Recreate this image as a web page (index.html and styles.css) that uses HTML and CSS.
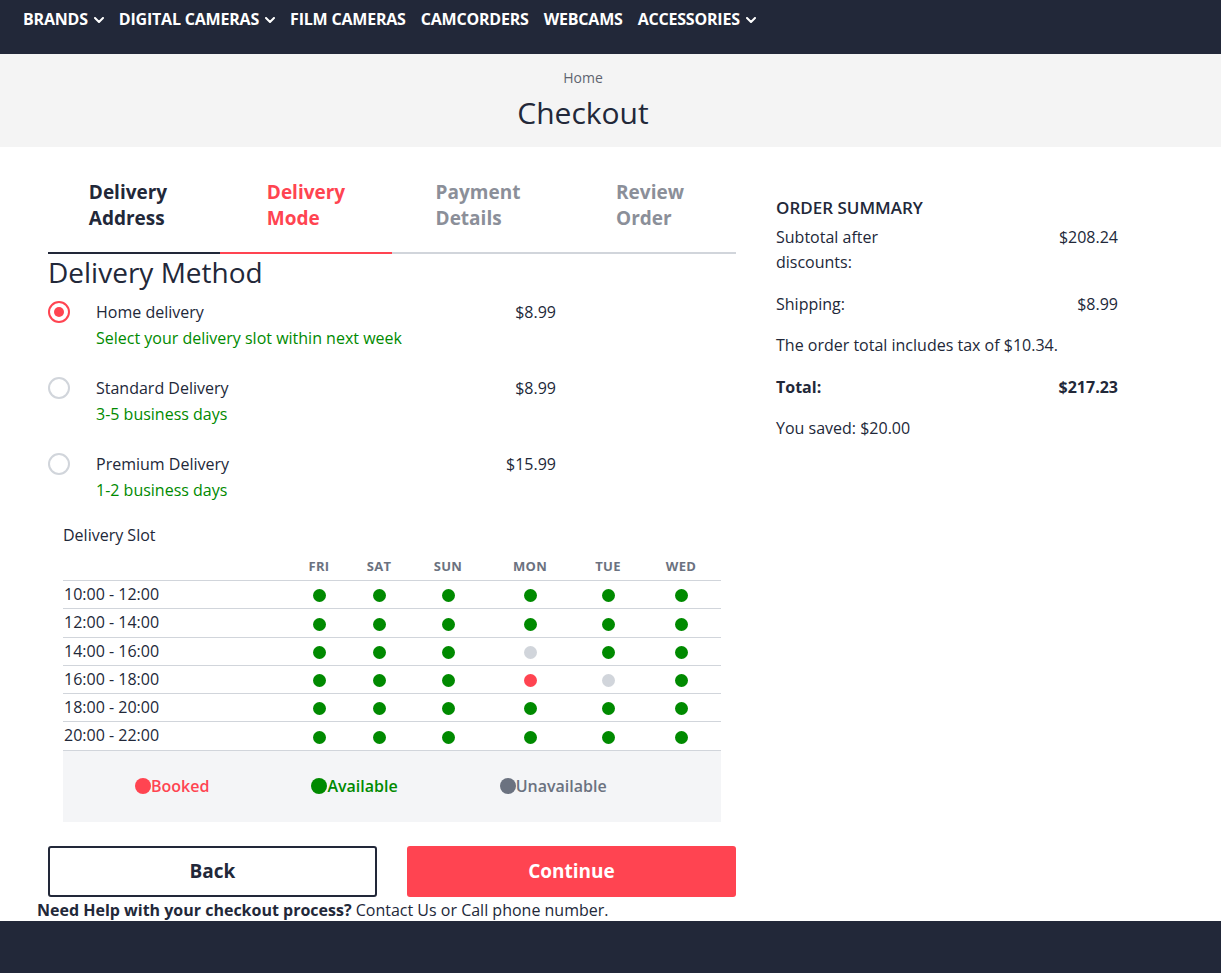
FILE: index.html
```html
<!DOCTYPE html>
<html lang="en">
<head>
<meta charset="utf-8">
<title>Checkout</title>
<link rel="stylesheet" href="styles.css">
</head>
<body>
<nav class="topnav">
  <ul class="nav-list">
    <li class="nav-item">BRANDS <svg class="chev" viewBox="0 0 10 6" width="10" height="6"><path d="M1 1l4 4 4-4" fill="none" stroke="#fff" stroke-width="2" stroke-linecap="round" stroke-linejoin="round"/></svg></li>
    <li class="nav-item">DIGITAL CAMERAS <svg class="chev" viewBox="0 0 10 6" width="10" height="6"><path d="M1 1l4 4 4-4" fill="none" stroke="#fff" stroke-width="2" stroke-linecap="round" stroke-linejoin="round"/></svg></li>
    <li class="nav-item">FILM CAMERAS</li>
    <li class="nav-item">CAMCORDERS</li>
    <li class="nav-item">WEBCAMS</li>
    <li class="nav-item">ACCESSORIES <svg class="chev" viewBox="0 0 10 6" width="10" height="6"><path d="M1 1l4 4 4-4" fill="none" stroke="#fff" stroke-width="2" stroke-linecap="round" stroke-linejoin="round"/></svg></li>
  </ul>
</nav>

<header class="page-head">
  <div class="container head-inner">
    <div class="crumb">Home</div>
    <h1 class="title">Checkout</h1>
  </div>
</header>

<main class="container layout">
  <section class="left">
    <div class="tabs">
      <div class="tab tab-done"><span>Delivery<br>Address</span></div>
      <div class="tab tab-active"><span>Delivery<br>Mode</span></div>
      <div class="tab tab-todo"><span>Payment<br>Details</span></div>
      <div class="tab tab-todo"><span>Review<br>Order</span></div>
    </div>

    <h2 class="method-title">Delivery Method</h2>

    <div class="options">
      <div class="option">
        <span class="radio radio-on"></span>
        <div class="opt-text">
          <div class="opt-name">Home delivery</div>
          <div class="opt-sub">Select your delivery slot within next week</div>
        </div>
        <div class="opt-price">$8.99</div>
      </div>
      <div class="option">
        <span class="radio"></span>
        <div class="opt-text">
          <div class="opt-name">Standard Delivery</div>
          <div class="opt-sub">3-5 business days</div>
        </div>
        <div class="opt-price">$8.99</div>
      </div>
      <div class="option">
        <span class="radio"></span>
        <div class="opt-text">
          <div class="opt-name">Premium Delivery</div>
          <div class="opt-sub">1-2 business days</div>
        </div>
        <div class="opt-price">$15.99</div>
      </div>
    </div>

    <div class="slot">
      <div class="slot-label">Delivery Slot</div>
      <table class="slot-table">
        <colgroup>
          <col class="c-time"><col class="c-fri"><col class="c-sat"><col class="c-sun"><col class="c-mon"><col class="c-tue"><col class="c-wed">
        </colgroup>
        <thead>
          <tr><th></th><th>FRI</th><th>SAT</th><th>SUN</th><th>MON</th><th>TUE</th><th>WED</th></tr>
        </thead>
        <tbody>
          <tr><td class="time">10:00 - 12:00</td><td><i class="dot g"></i></td><td><i class="dot g"></i></td><td><i class="dot g"></i></td><td><i class="dot g"></i></td><td><i class="dot g"></i></td><td><i class="dot g"></i></td></tr>
          <tr><td class="time">12:00 - 14:00</td><td><i class="dot g"></i></td><td><i class="dot g"></i></td><td><i class="dot g"></i></td><td><i class="dot g"></i></td><td><i class="dot g"></i></td><td><i class="dot g"></i></td></tr>
          <tr><td class="time">14:00 - 16:00</td><td><i class="dot g"></i></td><td><i class="dot g"></i></td><td><i class="dot g"></i></td><td><i class="dot u"></i></td><td><i class="dot g"></i></td><td><i class="dot g"></i></td></tr>
          <tr><td class="time">16:00 - 18:00</td><td><i class="dot g"></i></td><td><i class="dot g"></i></td><td><i class="dot g"></i></td><td><i class="dot r"></i></td><td><i class="dot u"></i></td><td><i class="dot g"></i></td></tr>
          <tr><td class="time">18:00 - 20:00</td><td><i class="dot g"></i></td><td><i class="dot g"></i></td><td><i class="dot g"></i></td><td><i class="dot g"></i></td><td><i class="dot g"></i></td><td><i class="dot g"></i></td></tr>
          <tr><td class="time">20:00 - 22:00</td><td><i class="dot g"></i></td><td><i class="dot g"></i></td><td><i class="dot g"></i></td><td><i class="dot g"></i></td><td><i class="dot g"></i></td><td><i class="dot g"></i></td></tr>
        </tbody>
      </table>
      <div class="legend">
        <span class="leg leg-booked"><i class="ldot"></i>Booked</span>
        <span class="leg leg-avail"><i class="ldot"></i>Available</span>
        <span class="leg leg-unav"><i class="ldot"></i>Unavailable</span>
      </div>
    </div>

    <div class="buttons">
      <button class="btn btn-back">Back</button>
      <button class="btn btn-continue">Continue</button>
    </div>
    <p class="help"><b>Need Help with your checkout process?</b> Contact Us or Call phone number.</p>
  </section>

  <aside class="summary">
    <h3 class="sum-title">ORDER SUMMARY</h3>
    <div class="sum-row"><span class="sum-label">Subtotal after discounts:</span><span>$208.24</span></div>
    <div class="sum-row"><span class="sum-label">Shipping:</span><span>$8.99</span></div>
    <div class="sum-row"><span>The order total includes tax of $10.34.</span></div>
    <div class="sum-row sum-total"><span class="sum-label">Total:</span><span>$217.23</span></div>
    <div class="sum-row"><span>You saved: $20.00</span></div>
  </aside>
</main>

<footer class="footer"></footer>
</body>
</html>
```

FILE: styles.css
```css
* { box-sizing: border-box; }
html, body { margin: 0; padding: 0; }
body {
  font-family: "Open Sans", "Noto Sans", sans-serif;
  color: #222839;
  background: #fff;
  font-size: 16px;
}

.topnav {
  background: #222839;
  height: 54px;
  padding: 8px 23px 0;
}
.nav-list {
  list-style: none;
  margin: 0;
  padding: 0;
  display: flex;
  gap: 15px;
}
.nav-item {
  color: #fff;
  font-weight: 700;
  font-size: 16px;
  line-height: 22px;
  display: flex;
  align-items: center;
  gap: 6px;
  letter-spacing: -0.2px;
}
.chev { display: block; margin-top: 1px; }

.container {
  width: 1070px;
  margin-left: 48px;
}

.page-head {
  background: #f4f4f4;
  height: 93px;
  padding-top: 14px;
}
.head-inner { text-align: center; }
.crumb {
  font-size: 14px;
  line-height: 20px;
  color: #5f6470;
}
.title {
  margin: 5px 0 0;
  font-size: 30px;
  line-height: 40px;
  font-weight: 400;
  color: #222839;
}

.layout {
  display: grid;
  grid-template-columns: 688px 342px;
  column-gap: 40px;
}

.tabs {
  display: grid;
  grid-template-columns: repeat(4, 1fr);
  padding-top: 32px;
}
.tab {
  text-align: center;
  font-weight: 700;
  font-size: 19px;
  line-height: 26px;
  padding-bottom: 21px;
  border-bottom: 2px solid #d1d5db;
}
.tab span { display: inline-block; text-align: left; }
.tab-done { color: #222839; border-bottom-color: #222839; padding-right: 12px; }
.tab-active { color: #ff4451; border-bottom-color: #ff4451; }
.tab-todo { color: #8b8f99; }

.method-title {
  margin: 1px 0 0;
  font-size: 28px;
  line-height: 34px;
  font-weight: 400;
}

.options {
  display: flex;
  flex-direction: column;
  gap: 24px;
  margin-top: 10px;
  width: 508px;
}
.option {
  display: flex;
  align-items: flex-start;
}
.radio {
  width: 22px;
  height: 22px;
  border-radius: 50%;
  border: 2px solid #d1d5db;
  margin-top: 2px;
  margin-right: 26px;
  flex: none;
  display: flex;
  align-items: center;
  justify-content: center;
}
.radio-on { border-color: #ff4451; }
.radio-on::after {
  content: "";
  width: 10px;
  height: 10px;
  border-radius: 50%;
  background: #ff4451;
}
.opt-text { flex: 1; }
.opt-name, .opt-sub, .opt-price { font-size: 16px; line-height: 26px; }
.opt-sub { color: #008a00; }
.opt-price { text-align: right; }

.slot {
  margin-top: 19px;
  padding: 0 15px;
}
.slot-label {
  font-size: 16px;
  line-height: 26px;
}
.slot-table {
  width: 658px;
  border-collapse: collapse;
  table-layout: fixed;
}
.c-time { width: 228px; }
.c-fri { width: 56px; }
.c-sat { width: 64px; }
.c-sun { width: 74px; }
.c-mon { width: 90px; }
.c-tue { width: 66px; }
.c-wed { width: 80px; }
.slot-table th {
  font-size: 13px;
  font-weight: 700;
  color: #6b7280;
  line-height: 18px;
  padding: 9px 0 5px;
  border-bottom: 1px solid #d1d5db;
  text-align: center;
  letter-spacing: 0.3px;
}
.slot-table td {
  padding: 0;
  line-height: 27.3px;
  height: 28.3px;
  border-bottom: 1px solid #d1d5db;
  text-align: center;
  vertical-align: middle;
}
.slot-table td.time {
  text-align: left;
  font-size: 16px;
  padding-left: 1px;
}
.dot {
  display: inline-block;
  width: 13px;
  height: 13px;
  border-radius: 50%;
  vertical-align: middle;
}
.dot.g { background: #008a00; }
.dot.u { background: #d1d5db; }
.dot.r { background: #ff4451; }

.legend {
  background: #f4f5f7;
  height: 71px;
  display: flex;
  align-items: center;
  padding-left: 72px;
  gap: 102px;
}
.leg {
  display: flex;
  align-items: center;
  font-size: 16px;
  font-weight: 600;
}
.ldot {
  width: 16px;
  height: 16px;
  border-radius: 50%;
  display: inline-block;
}
.leg-booked { color: #ff4451; }
.leg-booked .ldot { background: #ff4451; }
.leg-avail { color: #008a00; }
.leg-avail .ldot { background: #008a00; }
.leg-unav { color: #6b7280; }
.leg-unav .ldot { background: #6b7280; }

.buttons {
  display: grid;
  grid-template-columns: 329px 329px;
  column-gap: 30px;
  margin-top: 24px;
}
.btn {
  height: 51px;
  font-family: "Open Sans", "Noto Sans", sans-serif;
  font-size: 19px;
  font-weight: 700;
  border-radius: 3px;
  cursor: pointer;
}
.btn-back {
  background: #fff;
  color: #222839;
  border: 2px solid #222839;
}
.btn-continue {
  background: #ff4451;
  color: #fff;
  border: none;
}
.help {
  margin: 2px 0 0 -11px;
  font-size: 16px;
  line-height: 22px;
}
.help b { font-weight: 700; }

.summary {
  padding-top: 49px;
}
.sum-title {
  margin: 0 0 5px;
  font-size: 17px;
  line-height: 24px;
  font-weight: 600;
}
.sum-row {
  display: flex;
  justify-content: space-between;
  font-size: 16px;
  line-height: 25px;
  margin-bottom: 16.6px;
}
.sum-label { width: 150px; }
.sum-total { font-weight: 700; }

.footer {
  background: #222839;
  height: 60px;
  margin-top: 0;
}
```
